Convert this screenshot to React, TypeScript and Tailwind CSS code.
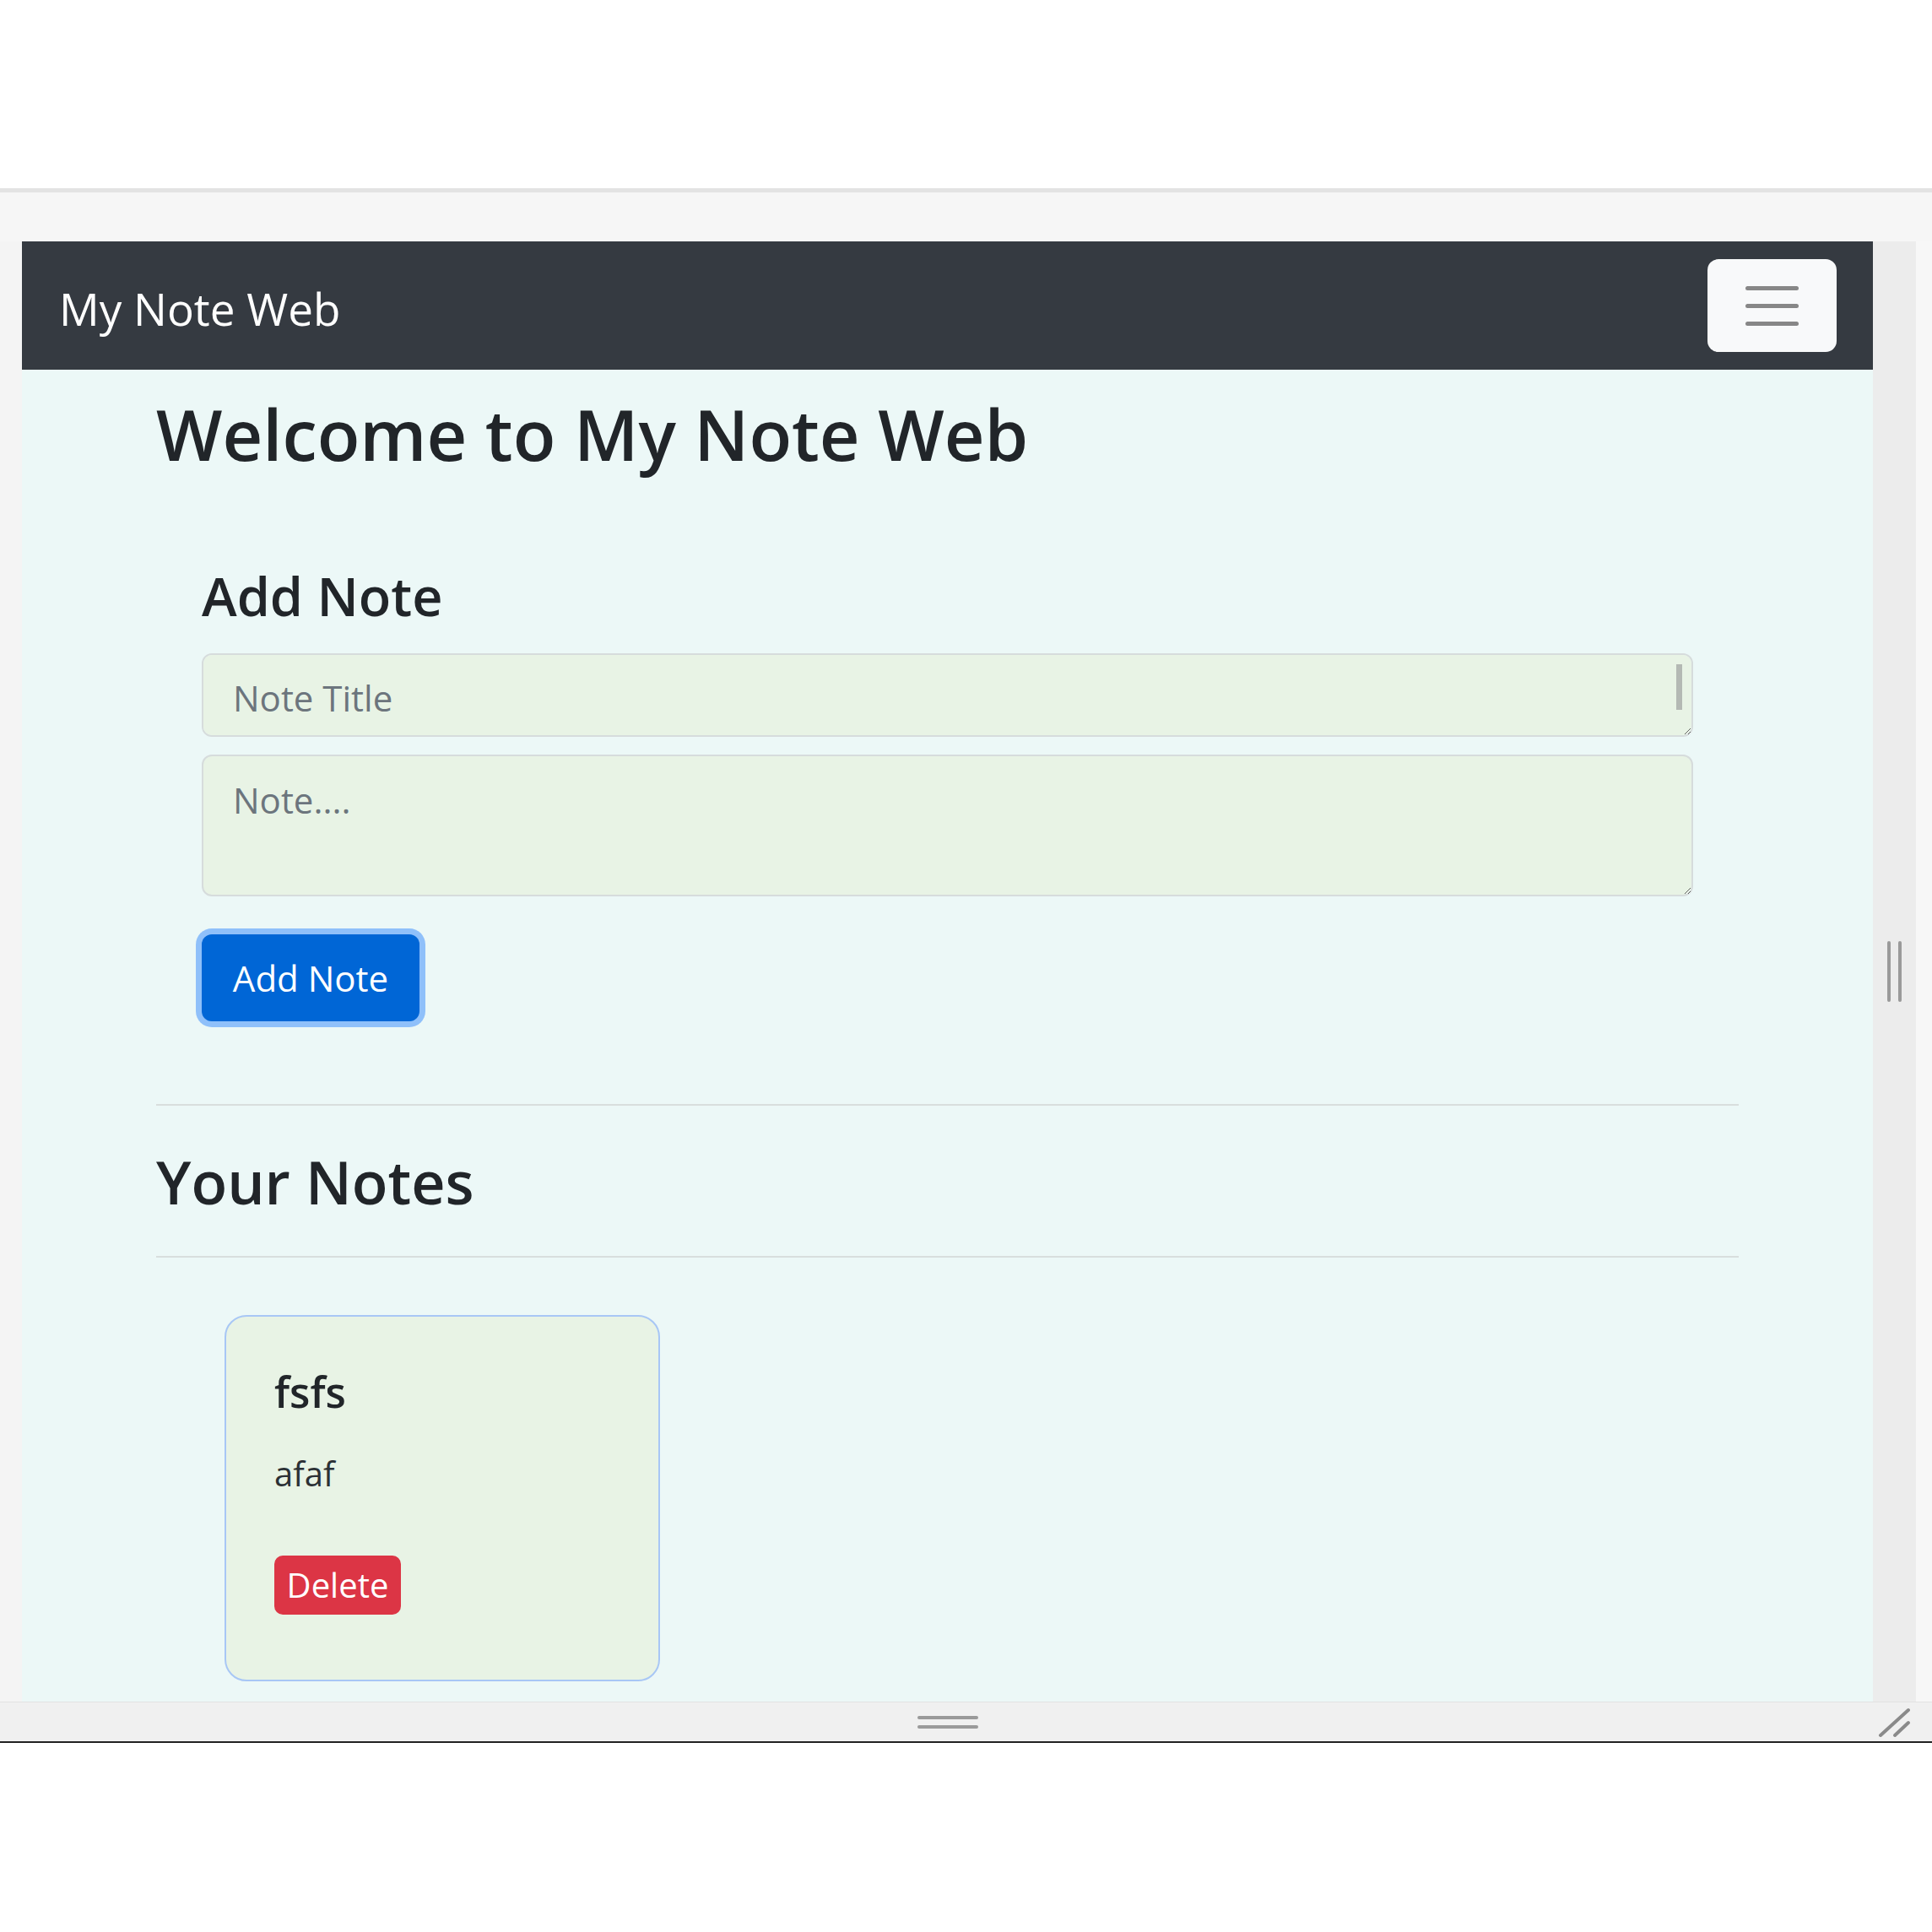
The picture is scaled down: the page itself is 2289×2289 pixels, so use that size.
import React from "react";

export default function App() {
  return (
    <div className="w-[2289px] h-[2289px] bg-white flex flex-col font-['Open_Sans',sans-serif] text-[#212529] overflow-hidden">
      <div className="h-[223px] shrink-0 bg-white" />
      <div className="h-[5px] shrink-0 bg-[#e3e3e3]" />
      <div className="flex flex-col shrink-0 bg-[#f6f6f6]">
        <div className="h-[58px]" />
        <div className="flex">
          <div className="w-[26px] shrink-0 bg-[#f4f4f4]" />
          <div className="w-[2193px] shrink-0 flex flex-col">
            <nav className="h-[152px] bg-[#353a41] flex items-center justify-between pl-[44px] pr-[43px]">
              <span className="text-white text-[53px] leading-[1.2] mt-[8px]">My Note Web</span>
              <button className="w-[153px] h-[110px] rounded-[13px] bg-[#f8f9fa] flex flex-col items-center justify-center gap-[16px]">
                <span className="block w-[63px] h-[5px] rounded-full bg-[#878787]" />
                <span className="block w-[63px] h-[5px] rounded-full bg-[#878787]" />
                <span className="block w-[63px] h-[5px] rounded-full bg-[#878787]" />
              </button>
            </nav>
            <main className="h-[1578px] bg-[#ecf8f7] pl-[159px] pr-[159px] flex flex-col">
              <h1 className="mt-[26px] text-[83px] leading-[1.2] font-semibold">Welcome to My Note Web</h1>
              <div className="px-[54px] mt-[104px] flex flex-col items-start">
                <h4 className="text-[63px] leading-[1.2] font-semibold">Add Note</h4>
                <div className="relative mt-[31px] w-full">
                  <textarea
                    rows={1}
                    placeholder="Note Title"
                    className="block w-full h-[99px] bg-[#e8f3e5] border-2 border-[#d6dcdc] rounded-[12px] pl-[35px] pr-[40px] pt-[19px] pb-[14px] text-[42px] leading-[1.5] placeholder:text-[#6c757d] outline-none resize-y"
                  />
                  <div className="absolute right-[13px] top-[13px] w-[7px] h-[54px] bg-[#b4b9b4]" />
                </div>
                <textarea
                  placeholder="Note...."
                  className="block mt-[21px] w-full h-[168px] bg-[#e8f3e5] border-2 border-[#d6dcdc] rounded-[12px] pl-[35px] pr-[37px] py-[20px] text-[42px] leading-[1.5] placeholder:text-[#6c757d] outline-none resize-y"
                />
                <button className="mt-[45px] w-[258px] h-[103px] bg-[#0066d6] text-white text-[42px] leading-[1.5] rounded-[12px] ring-[7px] ring-[#8fc0fa] flex items-center justify-center">
                  Add Note
                </button>
              </div>
              <div className="mt-[98px] border-t-2 border-[#d8dedd]" />
              <h2 className="mt-[48px] text-[70px] leading-[1.2] font-semibold">Your Notes</h2>
              <div className="mt-[46px] border-t-2 border-[#d8dedd]" />
              <div className="mt-[68px] ml-[81px] w-[516px] h-[434px] border-2 border-[#a8c7f5] rounded-[26px] bg-[#e8f3e5] pl-[57px] pt-[59px] flex flex-col items-start">
                <h5 className="text-[50px] leading-[1.2] font-semibold">fsfs</h5>
                <p className="mt-[37px] text-[40px] leading-[1.5] text-[#2b3035]">afaf</p>
                <button className="mt-[67px] w-[150px] h-[70px] bg-[#dc3545] text-white text-[40px] leading-[1.5] rounded-[10px] flex items-center justify-center">
                  Delete
                </button>
              </div>
            </main>
          </div>
          <div className="w-[51px] shrink-0 bg-[#ececec] flex items-center justify-center gap-[9px]">
            <span className="block w-[4px] h-[72px] rounded-full bg-[#9a9a9a]" />
            <span className="block w-[4px] h-[72px] rounded-full bg-[#9a9a9a]" />
          </div>
          <div className="w-[19px] shrink-0 bg-[#f7f7f7]" />
        </div>
        <div className="h-[47px] flex border-t border-[#e2e2e2] bg-[#f0f0f0]">
          <div className="w-[26px] shrink-0" />
          <div className="w-[2193px] shrink-0 flex flex-col items-center justify-center gap-[7px]">
            <span className="block w-[72px] h-[4px] rounded-full bg-[#9a9a9a]" />
            <span className="block w-[72px] h-[4px] rounded-full bg-[#9a9a9a]" />
          </div>
          <div className="w-[70px] shrink-0 flex items-end">
            <svg width="50" height="40" viewBox="0 0 50 40" className="mb-[3px]">
              <line x1="9" y1="36" x2="42" y2="6" stroke="#8a8a8a" strokeWidth="4" strokeLinecap="round" />
              <line x1="26" y1="36" x2="42" y2="21" stroke="#8a8a8a" strokeWidth="4" strokeLinecap="round" />
            </svg>
          </div>
        </div>
      </div>
      <div className="h-[2px] shrink-0 bg-[#222]" />
      <div className="flex-1 bg-white" />
    </div>
  );
}
